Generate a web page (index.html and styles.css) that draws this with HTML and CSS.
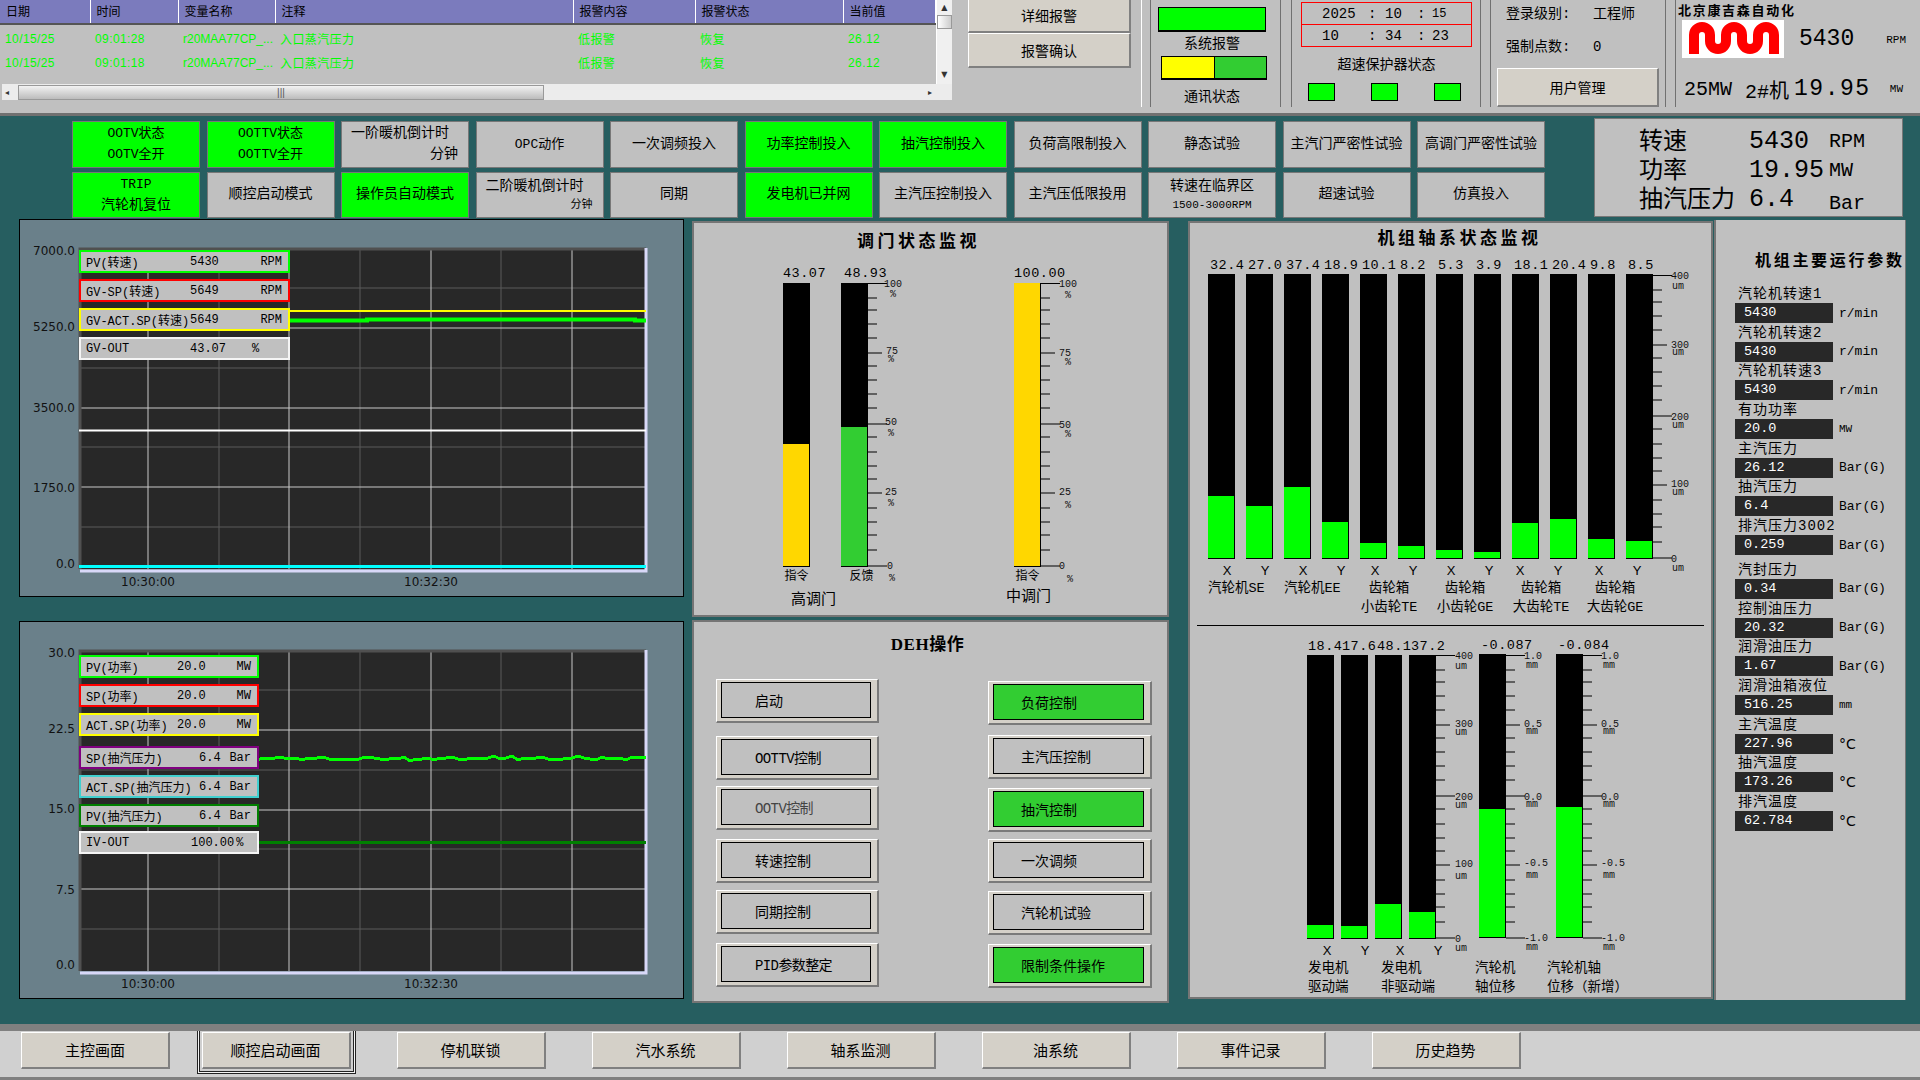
FILE: index.html
```html
<!DOCTYPE html>
<html lang="zh-CN">
<head>
    <meta charset="UTF-8">
    <meta name="viewport" content="width=device-width, initial-scale=1.0">
    <title>主控画面</title>
    <link rel="stylesheet" href="styles.css">
</head>
<body>
<div class="screen">

    <!-- alarm list and plant status -->
    <header class="top-bar">
        <div class="alarm-list">
            <div class="alarm-body">
                <table class="alarm-table">
                    <colgroup>
                        <col class="col-90"><col class="col-88"><col class="col-97"><col class="col-298"><col class="col-122"><col class="col-148"><col class="col-92">
                    </colgroup>
                    <thead>
                        <tr><th>日期</th><th>时间</th><th>变量名称</th><th>注释</th><th>报警内容</th><th>报警状态</th><th>当前值</th></tr>
                    </thead>
                    <tbody>
                        <tr><td>10/15/25</td><td>09:01:28</td><td>r20MAA77CP_...</td><td>入口蒸汽压力</td><td>低报警</td><td>恢复</td><td>26.12</td></tr>
                        <tr><td>10/15/25</td><td>09:01:18</td><td>r20MAA77CP_...</td><td>入口蒸汽压力</td><td>低报警</td><td>恢复</td><td>26.12</td></tr>
                    </tbody>
                </table>
                <div class="vscroll">
                    <span class="scroll-arrow">▲</span>
                    <span class="vscroll-thumb"></span>
                    <span class="scroll-arrow vscroll-down">▼</span>
                </div>
            </div>
            <div class="hscroll">
                <span class="scroll-arrow">◂</span>
                <span class="hscroll-thumb">|||</span>
                <span class="scroll-arrow hscroll-right">▸</span>
            </div>
        </div>

        <section class="sec sec-alarm">
            <button class="raised alarm-btn first">详细报警</button>
            <button class="raised alarm-btn">报警确认</button>
        </section>

        <section class="sec sec-sys">
            <div class="lamp-wide"></div>
            <div class="sec-caption">系统报警</div>
            <div class="lamp-pair"><span class="half-yellow"></span><span class="half-green"></span></div>
            <div class="sec-caption comm">通讯状态</div>
        </section>

        <section class="sec sec-clock">
            <div class="clock">
                <div class="clock-row"><span>2025</span><span>:</span><span>10</span><span>:</span><span class="small">15</span></div>
                <div class="clock-row"><span>10</span><span>:</span><span>34</span><span>:</span><span>23</span></div>
            </div>
            <div class="overspeed-title">超速保护器状态</div>
            <div class="overspeed-lamps"><span></span><span></span><span></span></div>
        </section>

        <section class="sec sec-login">
            <div class="login-row"><span>登录级别:</span><span>工程师</span></div>
            <div class="login-row second"><span>强制点数:</span><span>0</span></div>
            <button class="raised user-btn">用户管理</button>
        </section>

        <section class="sec sec-brand">
            <div class="brand-name">北京康吉森自动化</div>
            <div class="brand-row">
                <div class="logo">
                    <svg width="102" height="38" viewBox="0 0 102 38">
                        <path d="M12 34 V15 A8 8 0 0 1 28 15 V21 A8 8 0 0 0 44 21 V15 A8 8 0 0 1 60 15 V21 A8 8 0 0 0 76 21 V15 A8 8 0 0 1 92 15 V34" fill="none" stroke="#ff0000" stroke-width="10"/>
                    </svg>
                </div>
                <span class="brand-speed">5430</span>
                <span class="brand-unit">RPM</span>
            </div>
            <div class="brand-row lower">
                <span class="brand-model">25MW</span>
                <span class="brand-unit-no">2#机</span>
                <span class="brand-power">19.95</span>
                <span class="brand-unit mw">MW</span>
            </div>
        </section>
    </header>

    <!-- mode indicators -->
    <div class="status-row">
        <div class="status-grid">
            <div class="cell on small"><span>OOTV状态</span><span>OOTV全开</span></div>
            <div class="cell on small"><span>OOTTV状态</span><span>OOTTV全开</span></div>
            <div class="cell split"><span>一阶暖机倒计时</span><span class="right">分钟</span></div>
            <div class="cell small">OPC动作</div>
            <div class="cell">一次调频投入</div>
            <div class="cell on">功率控制投入</div>
            <div class="cell on">抽汽控制投入</div>
            <div class="cell">负荷高限制投入</div>
            <div class="cell">静态试验</div>
            <div class="cell">主汽门严密性试验</div>
            <div class="cell">高调门严密性试验</div>

            <div class="cell on small"><span>TRIP</span><span class="big">汽轮机复位</span></div>
            <div class="cell">顺控启动模式</div>
            <div class="cell on">操作员自动模式</div>
            <div class="cell split"><span>二阶暖机倒计时</span><span class="right tiny">分钟</span></div>
            <div class="cell">同期</div>
            <div class="cell on">发电机已并网</div>
            <div class="cell">主汽压控制投入</div>
            <div class="cell">主汽压低限投用</div>
            <div class="cell"><span>转速在临界区</span><span class="tiny">1500-3000RPM</span></div>
            <div class="cell">超速试验</div>
            <div class="cell">仿真投入</div>
        </div>
        <div class="readout">
            <span class="readout-name">转速</span><span class="readout-value">5430</span><span class="readout-unit">RPM</span>
            <span class="readout-name">功率</span><span class="readout-value">19.95</span><span class="readout-unit">MW</span>
            <span class="readout-name">抽汽压力</span><span class="readout-value">6.4</span><span class="readout-unit low">Bar</span>
        </div>
    </div>

    <main class="main">

        <!-- trend charts -->
        <div class="chart-col">
            <div class="chart-frame">
                <svg class="chart" width="663" height="376" viewBox="0 0 663 376">
                    <defs>
                        <g id="plot">
                            <rect x="59" y="28" width="567" height="321" fill="#282828"/>
                            <path class="grid-dim" d="M199 28V349M340 28V349M481 28V349M59 68H626M59 148H626M59 227H626M59 307H626"/>
                            <path class="grid-light" d="M128 28V349M269 28V349M411 28V349M552 28V349M59 108H626M59 188H626M59 267H626"/>
                            <path d="M60 349 V29 H626" fill="none" stroke="#505050" stroke-width="3"/>
                            <path d="M60 351 H626 V28" fill="none" stroke="#d8d8f8" stroke-width="3"/>
                        </g>
                    </defs>
                    <use href="#plot"/>
                    <path d="M59 91H626" stroke="#ffff00" stroke-width="2"/>
                    <path d="M59 100.5H347V99.5H615V100.5H626" fill="none" stroke="#00ff00" stroke-width="4"/>
                    <path d="M59 210.5H626" stroke="#ffffff" stroke-width="2"/>
                    <path d="M59 346.5H626" stroke="#00ffff" stroke-width="3"/>
                    <text class="axis" x="55" y="35" text-anchor="end">7000.0</text>
                    <text class="axis" x="55" y="111" text-anchor="end">5250.0</text>
                    <text class="axis" x="55" y="192" text-anchor="end">3500.0</text>
                    <text class="axis" x="55" y="272" text-anchor="end">1750.0</text>
                    <text class="axis" x="55" y="348" text-anchor="end">0.0</text>
                    <text class="axis" x="128" y="366" text-anchor="middle">10:30:00</text>
                    <text class="axis" x="411" y="366" text-anchor="middle">10:32:30</text>
                </svg>
                <div class="legend legend-speed">
                    <div class="legend-item b-green"><span class="legend-name">PV(转速)</span><span>5430</span><span class="legend-unit">RPM</span></div>
                    <div class="legend-item b-red"><span class="legend-name">GV-SP(转速)</span><span>5649</span><span class="legend-unit">RPM</span></div>
                    <div class="legend-item b-yellow"><span class="legend-name">GV-ACT.SP(转速)</span><span>5649</span><span class="legend-unit">RPM</span></div>
                    <div class="legend-item b-white"><span class="legend-name">GV-OUT</span><span>43.07</span><span class="legend-unit pct">%</span></div>
                </div>
            </div>

            <div class="chart-frame second">
                <svg class="chart" width="663" height="376" viewBox="0 0 663 376">
                    <use href="#plot"/>
                    <polyline id="extract-line" class="noisy" fill="none" stroke="#00ff00" stroke-width="3" points="59,137 240,137 246,136 252,137 258,135 264,136 270,137 276,136 282,138 288,136 294,137 300,135 306,136 312,138 318,137 324,137 330,137 336,138 342,136 348,135 354,136 360,137 366,138 372,136 378,137 384,135 390,139 396,137 402,137 408,136 414,138 420,136 426,136 432,135 438,137 444,138 450,136 456,137 462,136 468,136 474,134 480,137 486,136 492,134 498,138 504,136 510,137 516,136 522,135 528,137 534,137 540,138 546,136 552,136 558,134 564,136 570,137 576,138 582,135 588,137 594,136 600,136 606,138 612,135 618,136 626,135"/>
                    <use href="#extract-line" class="line-glow"/>
                    <path d="M59 220.5H626" stroke="#008000" stroke-width="3"/>
                    <text class="axis" x="55" y="35" text-anchor="end">30.0</text>
                    <text class="axis" x="55" y="111" text-anchor="end">22.5</text>
                    <text class="axis" x="55" y="191" text-anchor="end">15.0</text>
                    <text class="axis" x="55" y="272" text-anchor="end">7.5</text>
                    <text class="axis" x="55" y="347" text-anchor="end">0.0</text>
                    <text class="axis" x="128" y="366" text-anchor="middle">10:30:00</text>
                    <text class="axis" x="411" y="366" text-anchor="middle">10:32:30</text>
                </svg>
                <div class="legend legend-power">
                    <div class="legend-item b-green"><span class="legend-name">PV(功率)</span><span>20.0</span><span class="legend-unit">MW</span></div>
                    <div class="legend-item b-red"><span class="legend-name">SP(功率)</span><span>20.0</span><span class="legend-unit">MW</span></div>
                    <div class="legend-item b-yellow"><span class="legend-name">ACT.SP(功率)</span><span>20.0</span><span class="legend-unit">MW</span></div>
                    <div class="legend-item b-purple wide"><span class="legend-name">SP(抽汽压力)</span><span>6.4</span><span class="legend-unit">Bar</span></div>
                    <div class="legend-item b-aqua wide"><span class="legend-name">ACT.SP(抽汽压力)</span><span>6.4</span><span class="legend-unit">Bar</span></div>
                    <div class="legend-item b-dkgreen wide"><span class="legend-name">PV(抽汽压力)</span><span>6.4</span><span class="legend-unit">Bar</span></div>
                    <div class="legend-item b-white mid"><span class="legend-name">IV-OUT</span><span>100.00</span><span class="legend-unit pct">%</span></div>
                </div>
            </div>
        </div>

        <!-- valves and DEH operation -->
        <div class="mid-col">
            <section class="panel valve-panel">
                <h2 class="panel-title">调门状态监视</h2>
                <div class="valve-groups">
                    <div class="valve-group group-high">
                        <div class="gauge-row">
                            <div class="gauge gap-31">
                                <div class="gauge-value">43.07</div>
                                <div class="bar bar-284"><div class="fill gold" style="height:43%"></div></div>
                            </div>
                            <div class="gauge">
                                <div class="gauge-value nudge">48.93</div>
                                <div class="bar bar-284"><div class="fill lime" style="height:49%"></div></div>
                            </div>
                            <svg class="scale scale-valve">
                                <defs>
                                    <path id="ticks" d="M0 15h9M0 27h9M0 41h9M0 55h9M0 83h9M0 97h9M0 111h9M0 125h9M0 154h9M0 169h9M0 183h9M0 196h9M0 225h9M0 239h9M0 252h9M0 267h9M0 70h14M0 210h14M0 .5h19M0 141h19M0 283h19"/>
                                </defs>
                                <use href="#ticks" class="tick-lines"/>
                                <text class="tick" x="16" y="3.5">100</text><text class="tick" x="22" y="13.5">%</text>
                                <text class="tick" x="18" y="70.5">75</text><text class="tick" x="20" y="78.5">%</text>
                                <text class="tick" x="17" y="141.5">50</text><text class="tick" x="20" y="152.5">%</text>
                                <text class="tick" x="17" y="211.5">25</text><text class="tick" x="20" y="222.5">%</text>
                                <text class="tick" x="19" y="285.5">0</text><text class="tick" x="21" y="297.5">%</text>
                            </svg>
                        </div>
                        <div class="cap-row">
                            <span class="cap">指令</span><span class="cap cap-feedback">反馈</span>
                        </div>
                        <div class="valve-name">高调门</div>
                    </div>
                    <div class="valve-group group-mid">
                        <div class="gauge-row">
                            <div class="gauge">
                                <div class="gauge-value">100.00</div>
                                <div class="bar bar-284"><div class="fill gold" style="height:100%"></div></div>
                            </div>
                            <svg class="scale scale-valve">
                                <use href="#ticks" class="tick-lines"/>
                                <text class="tick" x="18" y="3.5">100</text><text class="tick" x="24" y="14.5">%</text>
                                <text class="tick" x="18" y="72.5">75</text><text class="tick" x="24" y="81.5">%</text>
                                <text class="tick" x="18" y="144.5">50</text><text class="tick" x="24" y="153.5">%</text>
                                <text class="tick" x="18" y="211.5">25</text><text class="tick" x="24" y="224.5">%</text>
                                <text class="tick" x="18" y="285.5">0</text><text class="tick" x="26" y="298.5">%</text>
                            </svg>
                        </div>
                        <div class="cap-row">
                            <span class="cap">指令</span>
                        </div>
                        <div class="valve-name name-mid">中调门</div>
                    </div>
                </div>
            </section>

            <section class="panel deh-panel">
                <h2 class="panel-title deh-title">DEH操作</h2>
                <div class="deh-grid">
                    <div class="deh-col left">
                        <div class="deh-btn"><span class="deh-face pad-39">启动</span></div>
                        <div class="deh-btn"><span class="deh-face pad-39 tight">OOTTV控制</span></div>
                        <div class="deh-btn"><span class="deh-face pad-39 tight dim">OOTV控制</span></div>
                        <div class="deh-btn"><span class="deh-face pad-39">转速控制</span></div>
                        <div class="deh-btn"><span class="deh-face pad-39">同期控制</span></div>
                        <div class="deh-btn"><span class="deh-face pad-39 tight">PID参数整定</span></div>
                    </div>
                    <div class="deh-col right">
                        <div class="deh-btn"><span class="deh-face active">负荷控制</span></div>
                        <div class="deh-btn"><span class="deh-face">主汽压控制</span></div>
                        <div class="deh-btn"><span class="deh-face active">抽汽控制</span></div>
                        <div class="deh-btn"><span class="deh-face">一次调频</span></div>
                        <div class="deh-btn"><span class="deh-face">汽轮机试验</span></div>
                        <div class="deh-btn"><span class="deh-face active">限制条件操作</span></div>
                    </div>
                </div>
            </section>
        </div>

        <!-- shaft vibration -->
        <section class="panel shaft-panel">
            <h2 class="panel-title shaft-title">机组轴系状态监视</h2>
            <div class="gauge-row shaft-top">
                <div class="gauge gap-11"><div class="gauge-value nudge-2">32.4</div><div class="bar bar-285"><div class="fill green" style="height:21.8%"></div></div></div>
                <div class="gauge gap-11"><div class="gauge-value nudge-2">27.0</div><div class="bar bar-285"><div class="fill green" style="height:18.2%"></div></div></div>
                <div class="gauge gap-11"><div class="gauge-value nudge-2">37.4</div><div class="bar bar-285"><div class="fill green" style="height:24.9%"></div></div></div>
                <div class="gauge gap-11"><div class="gauge-value nudge-2">18.9</div><div class="bar bar-285"><div class="fill green" style="height:12.6%"></div></div></div>
                <div class="gauge gap-11"><div class="gauge-value nudge-2">10.1</div><div class="bar bar-285"><div class="fill green" style="height:5.3%"></div></div></div>
                <div class="gauge gap-11"><div class="gauge-value nudge-2">8.2</div><div class="bar bar-285"><div class="fill green" style="height:4.2%"></div></div></div>
                <div class="gauge gap-11"><div class="gauge-value nudge-2">5.3</div><div class="bar bar-285"><div class="fill green" style="height:2.8%"></div></div></div>
                <div class="gauge gap-11"><div class="gauge-value nudge-2">3.9</div><div class="bar bar-285"><div class="fill green" style="height:2.1%"></div></div></div>
                <div class="gauge gap-11"><div class="gauge-value nudge-2">18.1</div><div class="bar bar-285"><div class="fill green" style="height:12.3%"></div></div></div>
                <div class="gauge gap-11"><div class="gauge-value nudge-2">20.4</div><div class="bar bar-285"><div class="fill green" style="height:13.7%"></div></div></div>
                <div class="gauge gap-11"><div class="gauge-value nudge-2">9.8</div><div class="bar bar-285"><div class="fill green" style="height:6.7%"></div></div></div>
                <div class="gauge"><div class="gauge-value nudge-2">8.5</div><div class="bar bar-285"><div class="fill green" style="height:6%"></div></div></div>
                <svg class="scale scale-shaft">
                    <use href="#ticks" class="tick-lines" y="1"/>
                    <text class="tick" x="18" y="4.5">400</text><text class="tick" x="19" y="15">um</text>
                    <text class="tick" x="18" y="73.5">300</text><text class="tick" x="19" y="81">um</text>
                    <text class="tick" x="18" y="145.5">200</text><text class="tick" x="19" y="154">um</text>
                    <text class="tick" x="18" y="212.5">100</text><text class="tick" x="19" y="221">um</text>
                    <text class="tick" x="18" y="287.5">0</text><text class="tick" x="19" y="297">um</text>
                </svg>
            </div>
            <div class="axis-groups">
                <div class="axis-group"><div class="xy"><span>X</span><span>Y</span></div><div class="group-label">汽轮机SE</div></div>
                <div class="axis-group"><div class="xy"><span>X</span><span>Y</span></div><div class="group-label">汽轮机EE</div></div>
                <div class="axis-group"><div class="xy shift-s"><span>X</span><span>Y</span></div><div class="group-label centred">齿轮箱<br>小齿轮TE</div></div>
                <div class="axis-group"><div class="xy shift-s"><span>X</span><span>Y</span></div><div class="group-label centred">齿轮箱<br>小齿轮GE</div></div>
                <div class="axis-group"><div class="xy shift-l"><span>X</span><span>Y</span></div><div class="group-label centred">齿轮箱<br>大齿轮TE</div></div>
                <div class="axis-group"><div class="xy shift-m"><span>X</span><span>Y</span></div><div class="group-label centred back">齿轮箱<br>大齿轮GE</div></div>
            </div>
            <hr class="shaft-rule">
            <div class="gauge-row shaft-bottom">
                <div class="gauge gap-7"><div class="gauge-value nudge-1">18.4</div><div class="bar bar-284"><div class="fill green" style="height:4.6%"></div></div></div>
                <div class="gauge gap-7"><div class="gauge-value nudge-1">17.6</div><div class="bar bar-284"><div class="fill green" style="height:4.2%"></div></div></div>
                <div class="gauge gap-7"><div class="gauge-value nudge-2">48.1</div><div class="bar bar-284"><div class="fill green" style="height:12%"></div></div></div>
                <div class="gauge"><div class="gauge-value nudge-2">37.2</div><div class="bar bar-284"><div class="fill green" style="height:9.2%"></div></div></div>
                <svg class="scale scale-um">
                    <use href="#ticks" class="tick-lines"/>
                    <text class="tick" x="19" y="3.5">400</text><text class="tick" x="19" y="14">um</text>
                    <text class="tick" x="19" y="71.5">300</text><text class="tick" x="19" y="80">um</text>
                    <text class="tick" x="19" y="144.5">200</text><text class="tick" x="19" y="153">um</text>
                    <text class="tick" x="19" y="211.5">100</text><text class="tick" x="19" y="224">um</text>
                    <text class="tick" x="19" y="286.5">0</text><text class="tick" x="19" y="296">um</text>
                </svg>
                <div class="gauge up"><div class="gauge-value nudge-2">-0.087</div><div class="bar bar-284"><div class="fill green" style="height:45.4%"></div></div></div>
                <svg class="scale scale-mm">
                    <use href="#ticks" class="tick-lines"/>
                    <text class="tick" x="18" y="3.5">1.0</text><text class="tick" x="20" y="13">mm</text>
                    <text class="tick" x="18" y="71.5">0.5</text><text class="tick" x="20" y="79">mm</text>
                    <text class="tick" x="18" y="144.5">0.0</text><text class="tick" x="20" y="152">mm</text>
                    <text class="tick" x="18" y="210.5">-0.5</text><text class="tick" x="20" y="223">mm</text>
                    <text class="tick" x="18" y="285.5">-1.0</text><text class="tick" x="20" y="295">mm</text>
                </svg>
                <div class="gauge up"><div class="gauge-value nudge-2">-0.084</div><div class="bar bar-284"><div class="fill green" style="height:45.8%"></div></div></div>
                <svg class="scale scale-last">
                    <use href="#ticks" class="tick-lines"/>
                    <text class="tick" x="18" y="3.5">1.0</text><text class="tick" x="20" y="13">mm</text>
                    <text class="tick" x="18" y="71.5">0.5</text><text class="tick" x="20" y="79">mm</text>
                    <text class="tick" x="18" y="144.5">0.0</text><text class="tick" x="20" y="152">mm</text>
                    <text class="tick" x="18" y="210.5">-0.5</text><text class="tick" x="20" y="223">mm</text>
                    <text class="tick" x="18" y="285.5">-1.0</text><text class="tick" x="20" y="295">mm</text>
                </svg>
            </div>
            <div class="axis-lower">
                <div class="lower-group g-drive"><div class="xy"><span>X</span><span>Y</span></div><div class="group-label">发电机<br>驱动端</div></div>
                <div class="lower-group g-nondrive"><div class="xy"><span>X</span><span>Y</span></div><div class="group-label">发电机<br>非驱动端</div></div>
                <div class="lower-group g-turbine"><div class="group-label">汽轮机<br>轴位移</div></div>
                <div class="lower-group g-turbine-new"><div class="group-label">汽轮机轴<br>位移（新增）</div></div>
            </div>
        </section>

        <!-- operating parameters -->
        <section class="panel param-panel">
            <h2 class="param-title">机组主要运行参数</h2>
            <div class="param"><div class="param-name">汽轮机转速1</div><div class="param-line"><span class="param-value">5430</span><span class="param-unit">r/min</span></div></div>
            <div class="param"><div class="param-name">汽轮机转速2</div><div class="param-line"><span class="param-value">5430</span><span class="param-unit">r/min</span></div></div>
            <div class="param"><div class="param-name">汽轮机转速3</div><div class="param-line"><span class="param-value">5430</span><span class="param-unit">r/min</span></div></div>
            <div class="param"><div class="param-name">有功功率</div><div class="param-line"><span class="param-value">20.0</span><span class="param-unit narrow">MW</span></div></div>
            <div class="param"><div class="param-name">主汽压力</div><div class="param-line"><span class="param-value">26.12</span><span class="param-unit">Bar(G)</span></div></div>
            <div class="param"><div class="param-name">抽汽压力</div><div class="param-line"><span class="param-value">6.4</span><span class="param-unit">Bar(G)</span></div></div>
            <div class="param"><div class="param-name">排汽压力3002</div><div class="param-line"><span class="param-value">0.259</span><span class="param-unit">Bar(G)</span></div></div>
            <div class="param seal"><div class="param-name">汽封压力</div><div class="param-line"><span class="param-value">0.34</span><span class="param-unit">Bar(G)</span></div></div>
            <div class="param"><div class="param-name">控制油压力</div><div class="param-line"><span class="param-value">20.32</span><span class="param-unit">Bar(G)</span></div></div>
            <div class="param"><div class="param-name">润滑油压力</div><div class="param-line"><span class="param-value">1.67</span><span class="param-unit">Bar(G)</span></div></div>
            <div class="param"><div class="param-name">润滑油箱液位</div><div class="param-line"><span class="param-value">516.25</span><span class="param-unit narrow">mm</span></div></div>
            <div class="param"><div class="param-name">主汽温度</div><div class="param-line"><span class="param-value">227.96</span><span class="param-unit temp">°C</span></div></div>
            <div class="param"><div class="param-name">抽汽温度</div><div class="param-line"><span class="param-value">173.26</span><span class="param-unit temp">°C</span></div></div>
            <div class="param"><div class="param-name">排汽温度</div><div class="param-line"><span class="param-value">62.784</span><span class="param-unit temp">°C</span></div></div>
        </section>
    </main>

    <nav class="nav">
        <button class="raised nav-btn">主控画面</button>
        <button class="raised nav-btn current">顺控启动画面</button>
        <button class="raised nav-btn">停机联锁</button>
        <button class="raised nav-btn">汽水系统</button>
        <button class="raised nav-btn">轴系监测</button>
        <button class="raised nav-btn">油系统</button>
        <button class="raised nav-btn">事件记录</button>
        <button class="raised nav-btn">历史趋势</button>
    </nav>
</div>
</body>
</html>
```

FILE: styles.css
```css
* {
    box-sizing: border-box;
}
body {
    margin: 0;
    background-color: #265e60;
    font-family: "Liberation Mono", "Noto Sans CJK SC", monospace;
    color: #000;
}
.screen {
    width: 1920px;
    height: 1080px;
    overflow: hidden;
    display: flex;
    flex-direction: column;
}
button {
    font-family: inherit;
    color: #000;
    padding: 0;
}
.raised {
    background-color: #d4d0c8;
    border-style: solid;
    border-width: 1px 2px 2px 1px;
    border-color: #fff #808080 #808080 #fff;
}

/* top bar */
.top-bar {
    height: 116px;
    flex: none;
    display: flex;
    align-items: flex-start;
    background-color: #c0c0c0;
    border-bottom: 3px solid #707070;
}
.alarm-list {
    width: 952px;
    flex: none;
}
.alarm-body {
    display: flex;
    height: 84px;
}
.alarm-table {
    width: 935px;
    table-layout: fixed;
    border-collapse: collapse;
    font-family: "Liberation Sans", "Noto Sans CJK SC", sans-serif;
    font-size: 12px;
    align-self: flex-start;
}
.col-90 { width: 90px; }
.col-88 { width: 88px; }
.col-97 { width: 97px; }
.col-298 { width: 298px; }
.col-122 { width: 122px; }
.col-148 { width: 148px; }
.col-92 { width: 92px; }
.alarm-table th {
    height: 24px;
    padding: 0 0 2px 6px;
    font-weight: normal;
    text-align: left;
    background-color: #7b7bbd;
    border-right: 1px solid #fff;
    border-bottom: 2px solid #555;
}
.alarm-table td {
    height: 25px;
    padding: 0 0 0 5px;
    color: #00ff00;
    letter-spacing: .4px;
    white-space: nowrap;
}
.alarm-table td:nth-child(3) {
    letter-spacing: 0;
}
.alarm-table tbody tr:first-child td {
    height: 26px;
    padding-top: 2px;
}
.vscroll {
    width: 17px;
    height: 84px;
    background-color: #f0f0f0;
    border-left: 1px solid #fff;
    display: flex;
    flex-direction: column;
    align-items: center;
}
.scroll-arrow {
    font-size: 8px;
    line-height: 15px;
    color: #333;
    font-family: "DejaVu Sans", sans-serif;
}
.vscroll-thumb {
    width: 15px;
    height: 14px;
    background: linear-gradient(to right, #fff, #ccc);
    border: 1px solid #999;
}
.vscroll-down {
    margin-top: auto;
    margin-bottom: 2px;
}
.hscroll {
    height: 16px;
    margin-left: 2px;
    background-color: #ececec;
    display: flex;
    align-items: center;
    padding-left: 3px;
}
.hscroll-thumb {
    width: 526px;
    height: 15px;
    margin-left: 9px;
    background: linear-gradient(to bottom, #f2f2f2, #bcbcbc);
    border: 1px solid #999;
    font-family: "Liberation Sans", sans-serif;
    font-size: 10px;
    line-height: 13px;
    color: #555;
    text-align: center;
}
.hscroll-right {
    margin-left: auto;
    margin-right: 20px;
}
.sec {
    height: 107px;
    flex: none;
    font-size: 14px;
}
.sec-alarm {
    width: 190px;
    padding-left: 16px;
    border-right: 1px solid #fff;
}
.alarm-btn {
    display: block;
    width: 163px;
    height: 35px;
    font-size: 14px;
}
.alarm-btn.first {
    margin-top: -2px;
}
.sec-sys {
    width: 131px;
    margin-left: 8px;
    padding: 7px 0 0 7px;
    border-left: 1px solid #707070;
    border-right: 1px solid #707070;
}
.lamp-wide {
    width: 108px;
    height: 25px;
    background-color: #00ff00;
    border: 1px solid #000;
    border-bottom-width: 2px;
}
.sec-caption {
    width: 108px;
    line-height: 24px;
    text-align: center;
    font-size: 14px;
}
.lamp-pair {
    width: 106px;
    height: 24px;
    margin-left: 3px;
    display: flex;
    border: 1px solid #000;
    border-bottom-width: 2px;
}
.half-yellow {
    width: 53px;
    background-color: #ffff00;
    border-right: 1px solid #000;
}
.half-green {
    flex: 1;
    background-color: #32cd32;
}
.comm {
    margin-top: 6px;
    line-height: 22px;
}
.sec-clock {
    width: 190px;
    margin-left: 10px;
    padding: 2px 0 0 9px;
    border-left: 1px solid #707070;
    border-right: 1px solid #707070;
}
.clock {
    width: 171px;
    height: 45px;
    border: 1px solid #ff0000;
    padding-left: 20px;
}
.clock-row {
    height: 21px;
    display: grid;
    grid-template-columns: 46px 17px 32px 15px 30px;
    align-items: center;
    font-size: 14px;
}
.clock-row + .clock-row {
    height: 22px;
    border-top: 1px solid #ff0000;
    margin-left: -20px;
    padding-left: 20px;
}
.clock-row .small {
    font-size: 12px;
}
.overspeed-title {
    margin-top: 8px;
    width: 171px;
    line-height: 20px;
    text-align: center;
}
.overspeed-lamps {
    margin: 8px 0 0 7px;
    display: flex;
    gap: 36px;
}
.overspeed-lamps span {
    width: 27px;
    height: 18px;
    background-color: #00ff00;
    border: 1px solid #000;
}
.sec-login {
    width: 176px;
    margin-left: 9px;
    padding: 4px 0 0 15px;
    border-left: 1px solid #707070;
    border-right: 1px solid #707070;
}
.login-row {
    display: grid;
    grid-template-columns: 87px auto;
    line-height: 20px;
}
.login-row.second {
    margin-top: 13px;
}
.user-btn {
    display: block;
    width: 162px;
    height: 39px;
    margin: 11px 0 0 -9px;
    font-size: 14px;
}
.sec-brand {
    width: 245px;
    margin-left: 9px;
    padding-left: 2px;
    border-left: 1px solid #707070;
}
.brand-name {
    font-family: "Noto Sans CJK SC", sans-serif;
    font-weight: bold;
    font-size: 13px;
    letter-spacing: 1.7px;
    line-height: 18px;
    margin-top: 1px;
}
.brand-row {
    display: flex;
    align-items: center;
    height: 38px;
    margin: 1px 0 0 4px;
}
.logo {
    width: 102px;
    height: 38px;
    background-color: #fff;
}
.logo svg {
    display: block;
}
.brand-speed {
    margin-left: 15px;
    font-size: 23px;
}
.brand-unit {
    margin-left: auto;
    padding-right: 14px;
    font-size: 11px;
    align-self: flex-start;
    line-height: 40px;
}
.brand-row.lower {
    margin: 19px 0 0 6px;
    height: 24px;
}
.brand-model {
    font-size: 20px;
}
.brand-unit-no {
    margin-left: 13px;
    font-size: 20px;
}
.brand-power {
    margin-left: 5px;
    font-size: 23px;
    letter-spacing: 1.5px;
}
.brand-unit.mw {
    line-height: 24px;
    padding-right: 17px;
}

/* mode indicators */
.status-row {
    height: 103px;
    flex: none;
    display: flex;
    align-items: flex-start;
    padding-left: 72px;
}
.status-grid {
    margin-top: 5px;
    display: grid;
    grid-template-columns: repeat(11, 128px);
    grid-auto-rows: 46.5px;
    column-gap: 6.5px;
    row-gap: 4px;
}
.cell {
    background-color: #c0c0c0;
    border: 1px solid #777;
    display: flex;
    flex-direction: column;
    justify-content: center;
    align-items: center;
    gap: 2px;
    font-size: 14px;
    line-height: 19px;
    white-space: nowrap;
}
.cell.on {
    background-color: #00ff00;
}
.cell.small {
    font-size: 13px;
}
.cell .big {
    font-size: 14px;
}
.cell.split {
    align-items: stretch;
    padding: 0 10px 0 9px;
}
.cell .right {
    text-align: right;
}
.cell .tiny {
    font-size: 11px;
    line-height: 15px;
}
.readout {
    width: 309px;
    height: 99px;
    margin: 2px 0 0 49px;
    padding: 8px 0 0 44px;
    background-color: #c0c0c0;
    border: 1px solid #777;
    display: grid;
    grid-template-columns: 110px 80px auto;
    grid-auto-rows: 29px;
    align-items: center;
    justify-content: start;
}
.readout-name {
    font-size: 24px;
    line-height: 24px;
    margin-top: -6px;
    white-space: nowrap;
    font-family: "Noto Sans CJK SC", sans-serif;
}
.readout-value {
    font-size: 25px;
    white-space: nowrap;
}
.readout-unit {
    font-size: 20px;
}
.readout-unit.low {
    margin-top: 8px;
}

/* layout of the main area */
.main {
    height: 805px;
    flex: none;
    display: flex;
    align-items: flex-start;
    padding-left: 19px;
}
.chart-col {
    width: 665px;
    flex: none;
    margin-right: 8px;
}
.chart-frame {
    position: relative;
    width: 665px;
    height: 378px;
    background-color: #6a808a;
    border: 1px solid #000;
}
.chart-frame.second {
    margin-top: 24px;
}
.chart {
    display: block;
}
.grid-dim {
    stroke: #5a5a5a;
    stroke-width: 1;
}
.grid-light {
    stroke: #c8c8c8;
    stroke-width: 1;
}
.axis {
    font-family: "DejaVu Sans", sans-serif;
    font-size: 12px;
    fill: #111;
}
.noisy {
    shape-rendering: crispEdges;
}
.line-glow {
    stroke: #ffff00;
    stroke-width: 1;
}

/* legends lie over the plots */
.legend {
    position: absolute;
    left: 59px;
    display: flex;
    flex-direction: column;
    gap: 6px;
}
.legend-speed {
    top: 30px;
    width: 211px;
}
.legend-power {
    top: 33px;
    width: 180px;
}
.legend-item {
    height: 23px;
    background-color: #c0c0c0;
    border: 2px solid;
    display: flex;
    align-items: center;
    padding: 0 6px 0 5px;
    font-size: 12px;
    white-space: nowrap;
}
.legend-name {
    width: 104px;
    flex: none;
}
.legend-power .legend-name {
    width: 91px;
}
.legend-power .wide .legend-name {
    width: 113px;
}
.legend-power .mid .legend-name {
    width: 105px;
}
.legend-power .b-purple {
    margin-top: 4px;
}
.legend-power .b-white {
    margin-top: -2px;
}
.legend-unit {
    margin-left: auto;
}
.legend-unit.pct {
    margin-left: 0;
    padding-left: 2px;
}
.legend-speed .pct {
    margin-left: 24px;
}
.b-green { border-color: #00ff00; }
.b-red { border-color: #ff0000; }
.b-yellow { border-color: #ffff00; }
.b-white { border-color: #f4f4f4; }
.b-purple { border-color: #800080; }
.b-aqua { border-color: #40d0d0; }
.b-dkgreen { border-color: #008000; }

/* panels */
.panel {
    background-color: #c0c0c0;
    border: 2px solid #757575;
}
.panel-title {
    margin: 0;
    font-family: "Noto Sans CJK SC", sans-serif;
    font-size: 17px;
    font-weight: bold;
    letter-spacing: 3.5px;
    text-align: center;
    line-height: 36px;
}
.mid-col {
    width: 477px;
    flex: none;
    margin-right: 19px;
    padding-top: 2px;
}
.valve-panel {
    height: 396px;
}
.valve-panel .panel-title {
    margin-bottom: 5px;
    padding-right: 24px;
    line-height: 34px;
    padding-bottom: 2px;
}
.valve-groups {
    display: flex;
    padding-left: 89px;
}
.valve-group {
    display: flex;
    flex-direction: column;
}
.group-high {
    width: 231px;
}
.gauge-row {
    display: flex;
    align-items: flex-start;
}
.gauge {
    width: 27px;
    flex: none;
}
.gauge.up {
    margin-top: -1px;
}
.gap-31 { margin-right: 31px; }
.gap-11 { margin-right: 11px; }
.gap-7 { margin-right: 7px; }
.gauge-value {
    height: 19px;
    font-size: 13.5px;
    letter-spacing: .5px;
    line-height: 19px;
    white-space: nowrap;
}
.nudge { margin-left: 3px; }
.nudge-1 { margin-left: 1px; }
.nudge-2 { margin-left: 2px; }
.shaft-panel .gauge-value {
    height: 16px;
    line-height: 16px;
}
.bar {
    width: 27px;
    background-color: #000;
    border-bottom: 1px solid #000;
    display: flex;
    flex-direction: column;
    justify-content: flex-end;
}
.bar-284 { height: 284px; }
.bar-285 { height: 285px; }
.fill {
    width: 26px;
}
.fill.gold { background-color: #ffd700; }
.fill.lime { background-color: #32cd32; }
.fill.green { background-color: #00ff00; }
.scale {
    flex: none;
    height: 284px;
    overflow: visible;
    margin-top: 19px;
}
.shaft-panel .scale {
    margin-top: 16px;
}
.scale-valve { width: 60px; }
.scale-shaft { width: 60px; }
.scale-um { width: 43px; }
.scale-mm { width: 50px; }
.scale-last { width: 60px; }
.tick-lines {
    stroke: #000;
    stroke-width: 1;
}
.tick {
    font-size: 10px;
    fill: #111;
}
.cap-row {
    display: flex;
    margin-top: 2px;
}
.cap {
    width: 27px;
    font-size: 12px;
    line-height: 16px;
    text-align: center;
    white-space: nowrap;
}
.cap-feedback {
    margin-left: 38px;
}
.valve-name {
    margin: 8px 0 0 8px;
    font-size: 15px;
    line-height: 16px;
}
.name-mid {
    margin: 5px 0 0 -8px;
}

/* DEH buttons */
.deh-panel {
    height: 383px;
    margin-top: 3px;
}
.deh-title {
    line-height: 46px;
    letter-spacing: .5px;
    padding-right: 6px;
    font-family: "Liberation Serif", "Noto Sans CJK SC", serif;
}
.deh-grid {
    display: flex;
    padding-left: 22px;
    margin-top: 11px;
}
.deh-col {
    width: 163px;
    flex: none;
}
.deh-col.right {
    margin: 2px 0 0 109px;
    width: 164px;
}
.deh-btn {
    height: 44px;
    background-color: #d4d0c8;
    border-style: solid;
    border-width: 1px 2px 2px 1px;
    border-color: #fff #7a7a7a #7a7a7a #fff;
    padding: 2px 6px 3px 4px;
    display: flex;
}
.deh-face {
    flex: 1;
    display: flex;
    align-items: center;
    padding-left: 27px;
    background-color: #c0c0c0;
    border: 1px solid #000;
    font-size: 14px;
    white-space: nowrap;
}
.deh-face.pad-39 {
    padding-left: 33px;
}
.deh-face.tight {
    letter-spacing: -.6px;
}
.deh-face.active {
    background-color: #32cd32;
}
.deh-face.dim {
    color: #444;
}
.left .deh-btn:nth-child(2) { margin-top: 13px; }
.left .deh-btn:nth-child(3) { margin-top: 6px; }
.left .deh-btn:nth-child(4) { margin-top: 9px; }
.left .deh-btn:nth-child(5) { margin-top: 7px; }
.left .deh-btn:nth-child(6) { margin-top: 9px; }
.right .deh-btn:nth-child(2) { margin-top: 10px; }
.right .deh-btn:nth-child(3) { margin-top: 9px; }
.right .deh-btn:nth-child(4) { margin-top: 7px; }
.right .deh-btn:nth-child(5) { margin-top: 8px; }
.right .deh-btn:nth-child(6) { margin-top: 9px; }

/* shaft vibration */
.shaft-panel {
    width: 525px;
    height: 778px;
    flex: none;
    margin-top: 2px;
}
.shaft-title {
    line-height: 27px;
    letter-spacing: 3.5px;
    padding-left: 18px;
}
.shaft-top {
    margin-top: 8px;
    padding-left: 18px;
}
.axis-groups {
    display: grid;
    grid-template-columns: repeat(6, 76px);
    padding-left: 18px;
    margin-top: 3px;
}
.xy {
    width: 76px;
    display: flex;
    font-size: 13px;
    line-height: 17px;
    font-family: "Liberation Sans", sans-serif;
}
.xy span {
    width: 38px;
    text-align: center;
}
.shift-s { margin-left: -4px; }
.shift-m { margin-left: -8px; }
.shift-l { margin-left: -11px; }
.group-label {
    font-size: 13.5px;
    line-height: 19px;
    white-space: nowrap;
}
.group-label.centred {
    width: 58px;
    text-align: center;
}
.group-label.back {
    margin-left: -2px;
}
.shaft-rule {
    margin: 8px 7px 0;
    border: 0;
    border-top: 1px solid #000;
}
.shaft-bottom {
    margin-top: 13px;
    padding-left: 117px;
}
.axis-lower {
    display: flex;
    padding-left: 118px;
    margin-top: 3px;
}
.lower-group {
    flex: none;
}
.g-drive { width: 73px; }
.g-nondrive { width: 94px; }
.g-turbine { width: 72px; padding-top: 17px; }
.g-turbine-new { padding-top: 17px; }

/* operating parameters */
.param-panel {
    width: 192px;
    height: 780px;
    flex: none;
    margin: 1px 0 0 1px;
    padding-left: 19px;
    overflow: hidden;
    border-width: 0 0 0 2px;
    border-right: 1px solid #757575;
}
.param-title {
    margin: 28px 0 15px 20px;
    font-family: "Noto Sans CJK SC", sans-serif;
    font-size: 16px;
    font-weight: bold;
    letter-spacing: 2.7px;
    line-height: 22px;
    white-space: nowrap;
}
.param {
    height: 38.7px;
}
.param.seal {
    margin-top: 5px;
}
.param-name {
    margin-left: 3px;
    font-size: 14px;
    letter-spacing: 1px;
    line-height: 18px;
    white-space: nowrap;
}
.param-line {
    display: flex;
    align-items: center;
}
.param-value {
    width: 98px;
    height: 20px;
    padding-left: 9px;
    background-color: #282828;
    color: #fff;
    font-size: 13.5px;
    line-height: 20px;
}
.param-unit {
    margin-left: 6px;
    font-size: 13px;
}
.param-unit.narrow {
    font-size: 11px;
}
.param-unit.temp {
    font-family: "DejaVu Sans", sans-serif;
    font-size: 14px;
}

/* bottom navigation */
.nav {
    flex: 1;
    display: flex;
    align-items: flex-start;
    gap: 46px;
    padding: 1px 0 0 21px;
    background-color: #d0d0d0;
    border-top: 7px solid #808080;
    border-bottom: 3px solid #808080;
    overflow: hidden;
}
.nav-btn {
    width: 149px;
    height: 37px;
    font-size: 15px;
    flex: none;
}
.nav-btn.current {
    margin-left: -14.5px;
    box-shadow: 0 0 0 2px #d0d0d0, 0 0 0 3px #222, 0 0 0 4px #f4f4f4, 0 0 0 5px #222;
}
```
